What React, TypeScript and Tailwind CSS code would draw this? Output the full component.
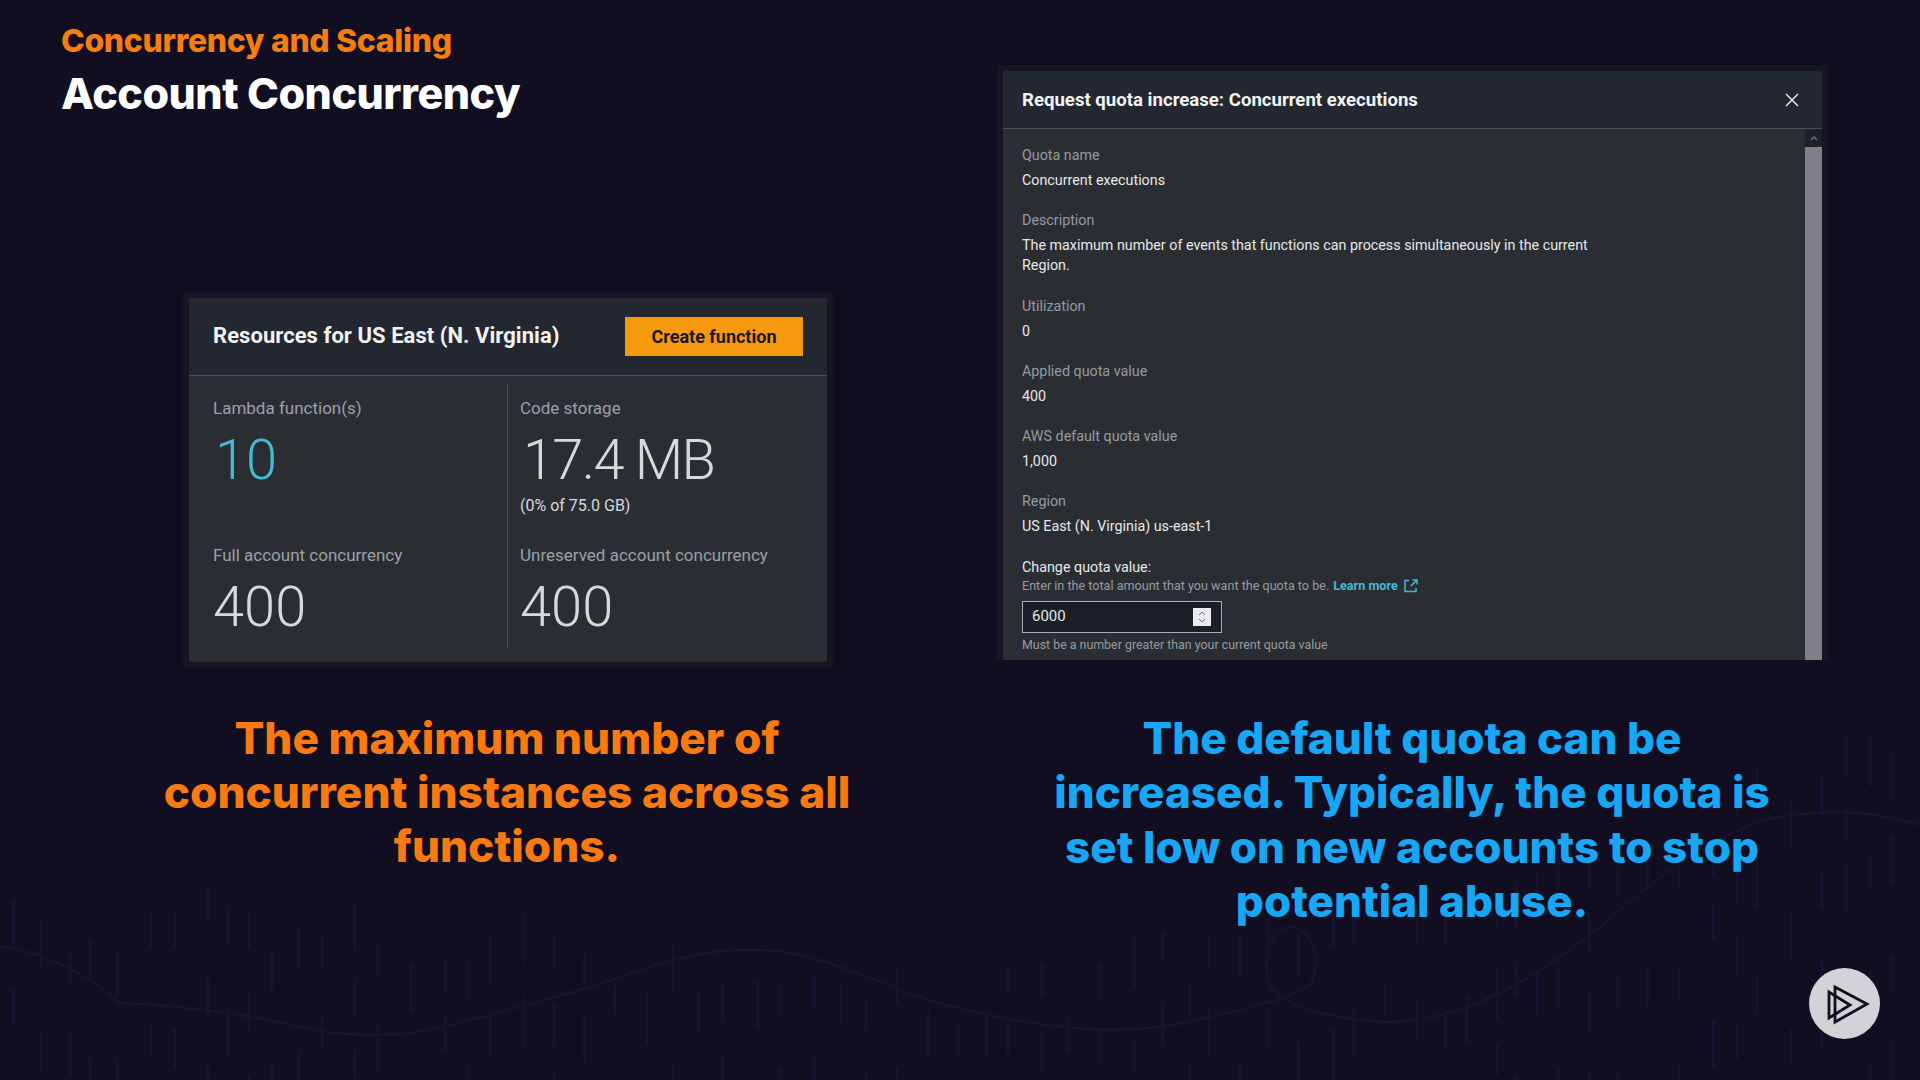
const FONT_HEAD = "font-['Inter','Liberation_Sans',sans-serif]";

// top of the dash field for a given x
function fieldTop(x: number) {
  if (x < 200) return 900 - x * 0.1;
  if (x < 1000) return 880 + (x - 200) * 0.1;
  if (x < 1700) return 960 - (x - 1000) * 0.25;
  return 785 - (x - 1700) * 0.45;
}

// faint dashes of the backdrop, from a fixed seed so that each run draws the same
function makeDashes() {
  const out: { x: number; y: number; h: number }[] = [];
  let seed = 7;
  const rnd = () => {
    seed = (seed * 16807) % 2147483647;
    return seed / 2147483647;
  };
  for (let x = 12; x < 1920; x += 19 + rnd() * 16) {
    let y = fieldTop(x) + rnd() * 70;
    while (y < 1080) {
      const h = 30 + rnd() * 22;
      out.push({ x, y, h });
      y += h + 22 + rnd() * 60;
    }
  }
  return out;
}

const dashes = makeDashes();

function Backdrop() {
  return (
    <svg className="absolute inset-0" width="1920" height="1080" fill="none">
      <path
        d="M0 947C40 950 90 975 120 1003C180 1005 250 1015 300 1027C340 1036 400 1040 450 1025C500 1012 570 995 620 977C670 958 720 948 760 950C810 952 850 970 900 990C950 1008 975 1012 1000 1017C1060 1030 1130 1035 1190 1022C1240 1010 1290 1000 1310 985C1325 960 1310 927 1290 927C1270 927 1262 960 1270 985C1285 1010 1340 1020 1390 1022C1470 1020 1540 975 1600 927C1660 875 1720 825 1790 815C1850 808 1890 815 1920 825"
        stroke="#18142e"
        strokeWidth="2"
      />
      {dashes.map((d, i) => (
        <rect key={i} x={d.x} y={d.y} width="3" height={d.h} rx="1.5" fill="#16122f" />
      ))}
    </svg>
  );
}

function Stat({
  label,
  value,
  sub,
  cyan,
  tight,
  className,
}: {
  label: string;
  value: string;
  sub?: string;
  cyan?: boolean;
  tight?: boolean;
  className?: string;
}) {
  return (
    <div className={`pt-[14px] ${className ?? ""}`}>
      <div className="text-[17px] leading-[20px] text-[#9ba1a6]">{label}</div>
      <div
        className={`mt-[12px] text-[56px] leading-[60px] font-light ${cyan ? "pl-[2px] text-[#44b9d6]" : "text-[#d5dbdb]"} ${tight ? "pl-[3px] tracking-[-1.7px]" : ""}`}
      >
        {value}
      </div>
      {sub && <div className="mt-[6px] text-[16px] leading-[20px] text-[#d5dbdb]">{sub}</div>}
    </div>
  );
}

function ResourceCard() {
  return (
    <div className="ml-[183px] w-[650px] border-[6px] border-[#171522] bg-[#2a2e33] font-['Roboto',sans-serif]">
      <div className="flex h-[78px] items-center justify-between border-b border-[#4a4e55] bg-[#232730] pl-[24px] pr-[24px]">
        <div className="pb-[2px] text-[22px] font-bold tracking-[0.05px] text-[#f2f3f3]">Resources for US East (N. Virginia)</div>
        <div className="flex h-[39px] w-[178px] items-center justify-center bg-[#f7990f] text-[18px] font-bold text-[#16191f]">
          Create function
        </div>
      </div>
      <div className="flex pt-[8px] pb-[13px]">
        <div className="w-[318px] pl-[24px]">
          <Stat label="Lambda function(s)" value="10" cyan className="h-[147px]" />
          <Stat label="Full account concurrency" value="400" className="h-[118px]" />
        </div>
        <div className="border-l border-[#4a4e55] pl-[12px]">
          <Stat label="Code storage" value="17.4 MB" sub="(0% of 75.0 GB)" tight className="h-[147px]" />
          <Stat label="Unreserved account concurrency" value="400" className="h-[118px]" />
        </div>
      </div>
    </div>
  );
}

function Field({ label, children }: { label: string; children: React.ReactNode }) {
  return (
    <div className="mb-[20.25px]">
      <div className="text-[14.3px] leading-[20px] text-[#959ba1]">{label}</div>
      <div className="mt-[5px] text-[14.3px] leading-[20px] text-[#e6e9ea]">{children}</div>
    </div>
  );
}

function QuotaModal() {
  return (
    <div className="h-[595px] w-[831px] overflow-hidden border-[6px] border-b-0 border-[#171522] bg-[#2a2e33] font-['Roboto',sans-serif]">
      <div className="flex h-[58px] items-center justify-between border-b border-[#4a4e55] bg-[#232730] pl-[19px] pr-[23px]">
        <div className="pt-[2px] text-[18.6px] font-bold text-[#f2f3f3]">Request quota increase: Concurrent executions</div>
        <svg width="14" height="14" viewBox="0 0 14 14" fill="none" stroke="#e6e9ea" strokeWidth="1.5">
          <path d="M1 1l12 12M13 1L1 13" />
        </svg>
      </div>
      <div className="flex h-[532px]">
        <div className="flex-1 pl-[19px] pt-[16px]">
          <Field label="Quota name">Concurrent executions</Field>
          <Field label="Description">
            The maximum number of events that functions can process simultaneously in the current
            <br />
            Region.
          </Field>
          <Field label="Utilization">0</Field>
          <Field label="Applied quota value">400</Field>
          <Field label="AWS default quota value">1,000</Field>
          <Field label="Region">US East (N. Virginia) us-east-1</Field>
          <div className="text-[14.3px] leading-[20px] text-[#e6e9ea]">Change quota value:</div>
          <div className="flex items-center text-[12.6px] leading-[18px] text-[#959ba1]">
            Enter in the total amount that you want the quota to be.
            <span className="ml-[4px] font-bold text-[#44b9d6]">Learn more</span>
            <svg className="ml-[6px]" width="14" height="14" viewBox="0 0 14 14" fill="none" stroke="#44b9d6" strokeWidth="1.5">
              <path d="M5 1.5H1v11h11V9M7 7l5.5-5.5M8.5 1H13v4.5" />
            </svg>
          </div>
          <div className="mt-[6px] flex h-[32px] w-[200px] items-center justify-between border border-[#aab0b5] bg-[#1b1f27] pl-[9px] pr-[10px] text-[15px] text-[#e6e9ea]">
            6000
            <div className="flex h-[18px] w-[18px] items-center justify-center bg-[#ebe9f2]">
              <svg width="8" height="14" viewBox="0 0 8 14" fill="none" stroke="#77757d" strokeWidth="1">
                <path d="M1 5l3-3 3 3M1 9l3 3 3-3" />
              </svg>
            </div>
          </div>
          <div className="mt-[3px] text-[12.4px] leading-[18px] text-[#959ba1]">
            Must be a number greater than your current quota value
          </div>
        </div>
        <div className="flex w-[17px] flex-col bg-[#7f7f87]">
          <div className="flex h-[18px] items-center justify-center bg-[#1d2028]">
            <svg width="8" height="6" viewBox="0 0 8 6" fill="none" stroke="#70747b" strokeWidth="1.3">
              <path d="M1 5l3-3 3 3" />
            </svg>
          </div>
        </div>
      </div>
    </div>
  );
}

function PlayBadge() {
  return (
    <div className="absolute left-[1809px] top-[968px] flex h-[71px] w-[71px] items-center justify-center rounded-full bg-[#d2d2d7]">
      <svg className="overflow-visible" width="46" height="40" viewBox="0 0 46 40" fill="none" stroke="#120e22" strokeWidth="2.8">
        <path d="M7 8v26l21-13z" />
        <path d="M13 3l32 17-32 18z" />
      </svg>
    </div>
  );
}

export default function App() {
  return (
    <div className="relative h-[1080px] w-[1920px] overflow-hidden bg-[#120e22]">
      <Backdrop />
      <div className="relative flex">
        <div className="w-[997px]">
          <div className={`pl-[61px] pt-[22px] font-extrabold ${FONT_HEAD}`}>
            <div className="text-[31.9px] leading-[38px] tracking-[-0.3px] text-[#f57e0e]">Concurrency and Scaling</div>
            <div className="mt-[8px] text-[43px] leading-[50px] tracking-[-0.5px] text-white">Account Concurrency</div>
          </div>
          <div className="mt-[174px]">
            <ResourceCard />
          </div>
          <div className={`ml-[137px] mt-[43px] w-[740px] text-center text-[44.2px] leading-[54px] font-extrabold text-[#f97a10] ${FONT_HEAD}`}>
            The maximum number of concurrent instances across all functions.
          </div>
        </div>
        <div className="pt-[65px]">
          <QuotaModal />
          <div className={`ml-[45px] mt-[51px] w-[740px] text-center text-[44px] leading-[54.3px] font-extrabold text-[#17a7f5] ${FONT_HEAD}`}>
            The default quota can be increased. Typically, the quota is set low on new accounts to stop potential abuse.
          </div>
        </div>
      </div>
      <PlayBadge />
    </div>
  );
}
